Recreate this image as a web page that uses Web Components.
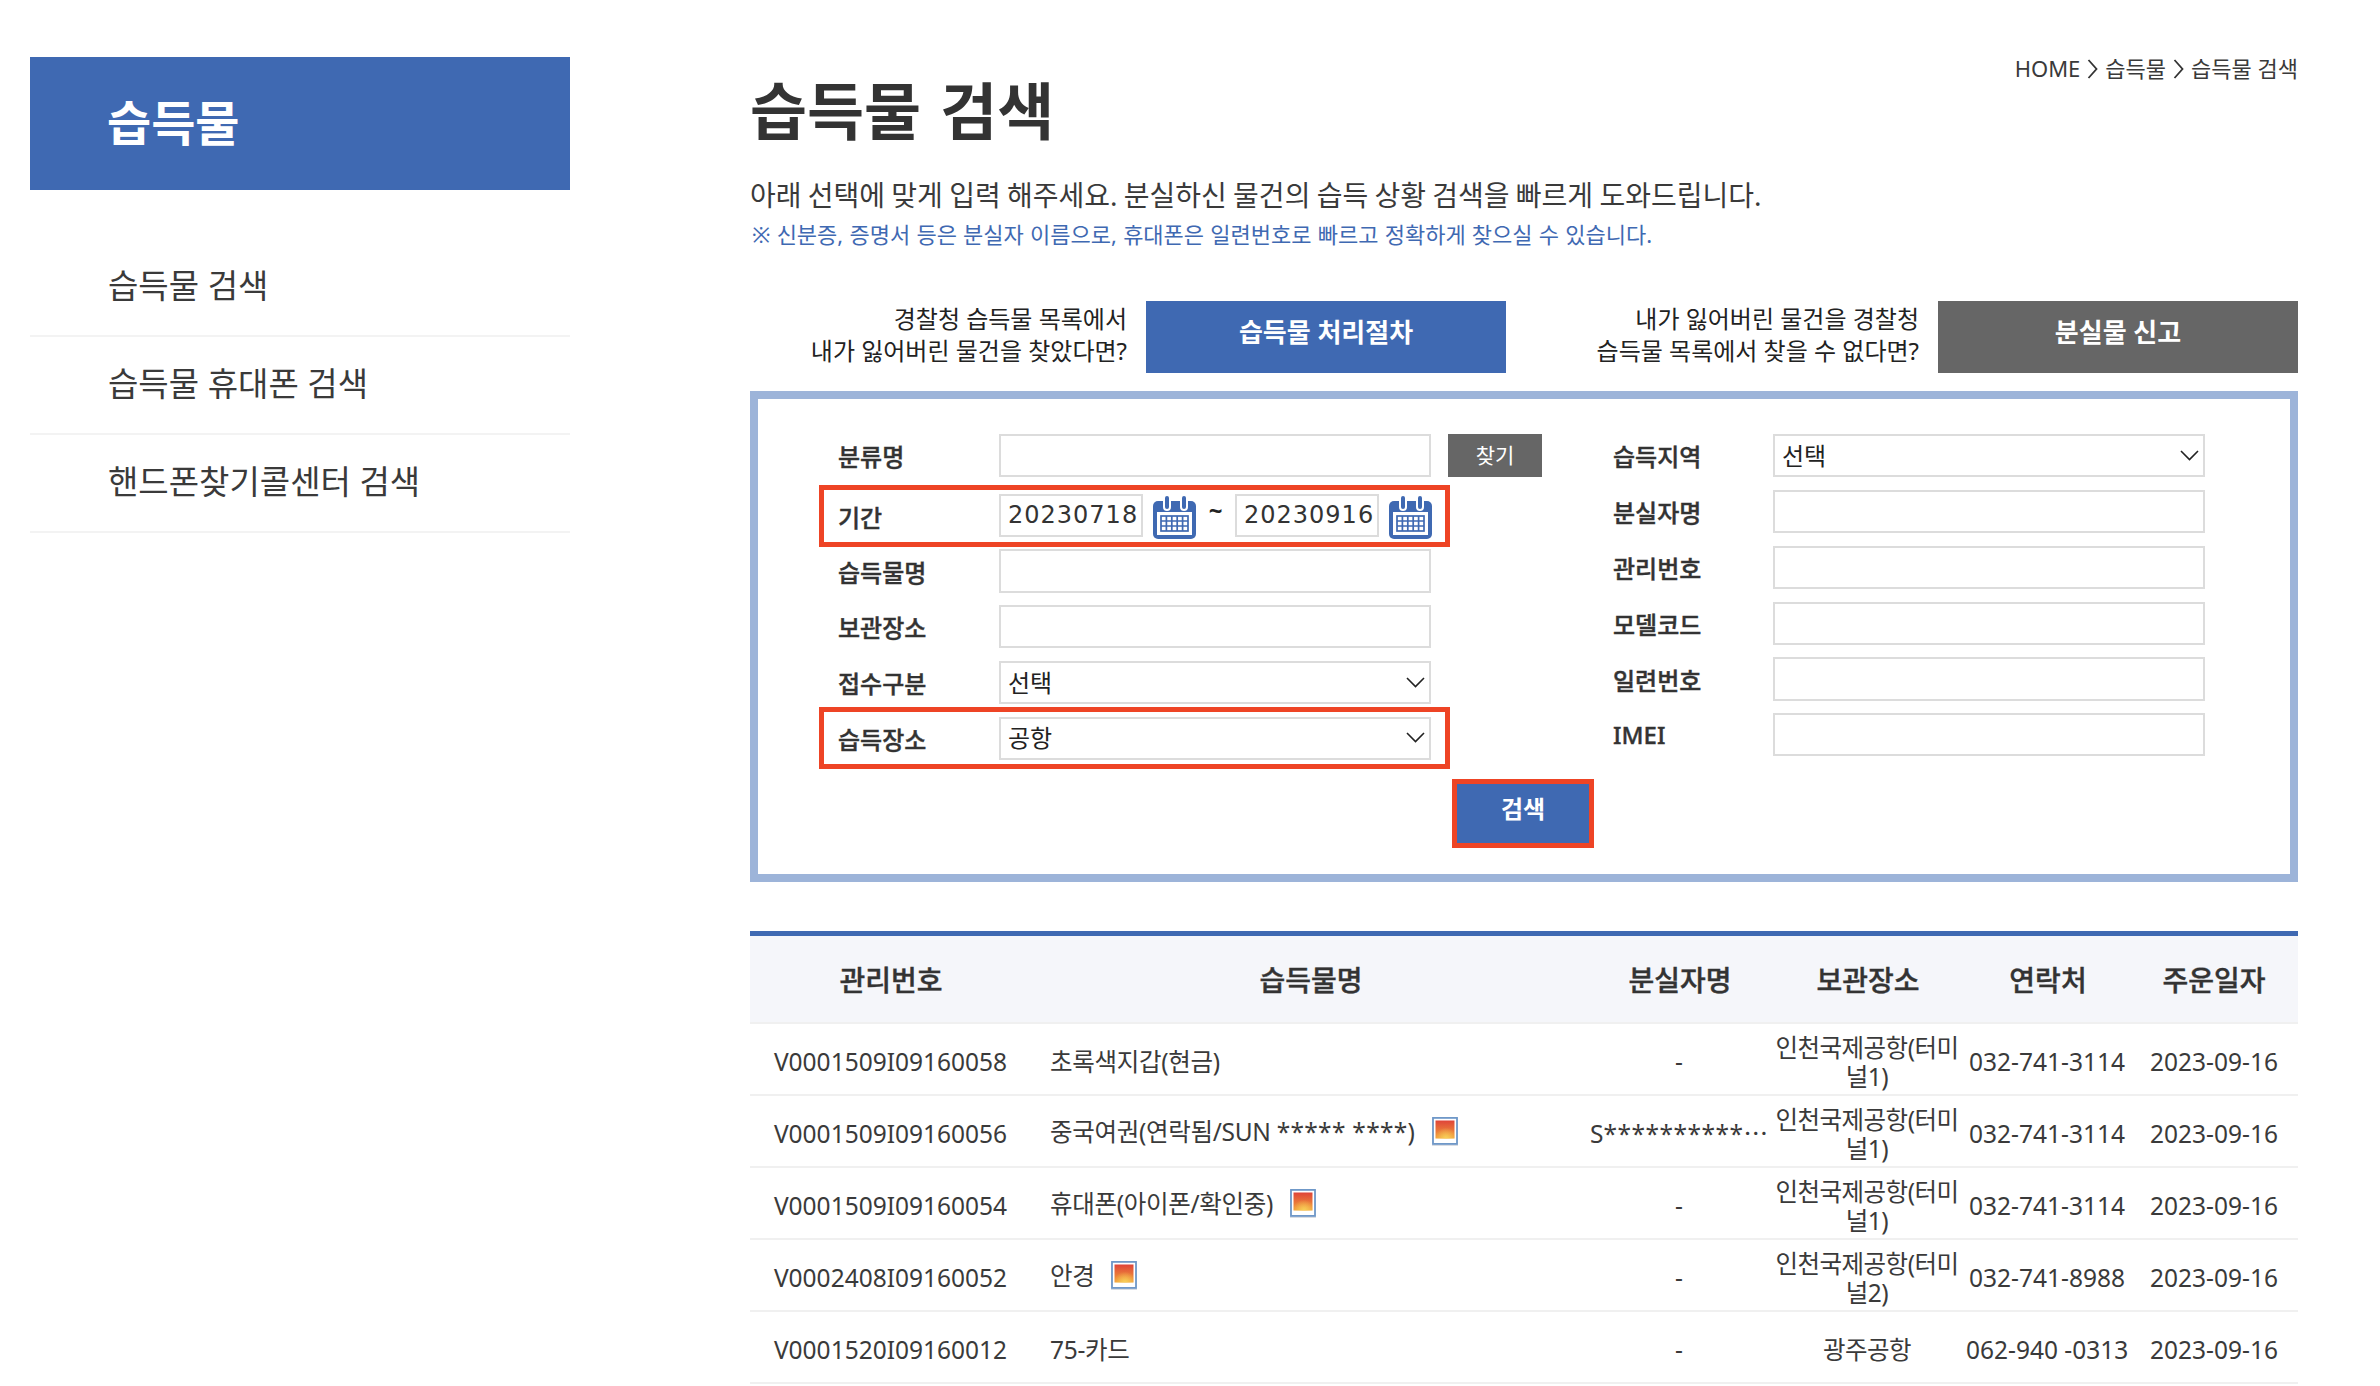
<!DOCTYPE html>
<html lang="ko">
<head>
<meta charset="utf-8">
<title>습득물 검색</title>
<style>
  html, body { margin: 0; background: #fff; }
  body { font-family: "Noto Sans", "Noto Sans CJK KR", sans-serif; color: #333; }
  .page { display: flex; align-items: flex-start; width: 2380px; height: 1386px; overflow: hidden; box-sizing: border-box; padding: 57px 0 0 30px; }
  .main { width: 1548px; margin-left: 180px; }
</style>
</head>
<body>
<div class="page">
  <lost-sidebar></lost-sidebar>
  <div class="main">
    <page-head></page-head>
    <notice-links></notice-links>
    <search-form></search-form>
    <result-table></result-table>
  </div>
</div>

<script>
const CALENDAR = `
  <svg width="43" height="43" viewBox="0 0 43 43" aria-hidden="true">
    <rect x="0" y="5" width="43" height="38" rx="5" fill="#3f69b2"/>
    <rect x="10" y="0" width="8" height="15" rx="4" fill="#fff"/>
    <rect x="27" y="0" width="8" height="15" rx="4" fill="#fff"/>
    <rect x="12" y="0" width="4" height="13" rx="2" fill="#3f69b2"/>
    <rect x="29" y="0" width="4" height="13" rx="2" fill="#3f69b2"/>
    <rect x="4" y="16" width="35" height="23" fill="#fff"/>
    <g fill="none" stroke="#3f69b2" stroke-width="1.7">
      <rect x="8" y="20" width="27" height="15"/>
      <path d="M8 25h27M8 30h27M13.4 20v15M18.8 20v15M24.2 20v15M29.6 20v15"/>
    </g>
  </svg>`;

const PICTURE = `
  <svg width="26" height="29" viewBox="0 0 26 29" aria-hidden="true">
    <defs>
      <linearGradient id="pic" x1="0" y1="0" x2="0" y2="1">
        <stop offset="0" stop-color="#df4439"/>
        <stop offset="1" stop-color="#f2a03a"/>
      </linearGradient>
      <radialGradient id="glow" cx=".55" cy="1" r=".6">
        <stop offset="0" stop-color="#f8d25a"/>
        <stop offset="1" stop-color="#f8d25a" stop-opacity="0"/>
      </radialGradient>
    </defs>
    <rect x="0" y="1" width="26" height="28" fill="#d9dde3"/>
    <rect x="1" y="0.9" width="24" height="26" fill="#fff" stroke="#6f98c8" stroke-width="1.8"/>
    <rect x="3.5" y="3.5" width="19" height="18" fill="url(#pic)"/>
    <rect x="3.5" y="3.5" width="19" height="18" fill="url(#glow)"/>
  </svg>`;

const sidebarTpl = document.createElement("template");
sidebarTpl.innerHTML = `
  <style>
    :host { display: block; width: 540px; flex: none; font-family: "Noto Sans", "Noto Sans CJK KR", sans-serif; }
    h2 {
      margin: 0; height: 133px; box-sizing: border-box; padding: 0 0 8px 77px;
      display: flex; align-items: center;
      background: #3f69b2; color: #fff; font-size: 48px; font-weight: 700;
    }
    ul { list-style: none; margin: 49px 0 0; padding: 0; }
    li {
      height: 98px; box-sizing: border-box; padding: 0 0 7px 78px;
      display: flex; align-items: center;
      border-bottom: 2px solid #f3f3f3; color: #3a3a3a; font-size: 33px;
    }
  </style>
  <h2>습득물</h2>
  <ul>
    <li>습득물 검색</li>
    <li>습득물 휴대폰 검색</li>
    <li>핸드폰찾기콜센터 검색</li>
  </ul>
`;

class LostSidebar extends HTMLElement {
  constructor() {
    super();
    this.attachShadow({ mode: "open" });
    this.shadowRoot.appendChild(sidebarTpl.content.cloneNode(true));
  }
}
customElements.define("lost-sidebar", LostSidebar);

const headTpl = document.createElement("template");
headTpl.innerHTML = `
  <style>
    :host { display: block; color: #333; }
    .top { display: flex; justify-content: space-between; align-items: flex-start; }
    h1 { margin: 19px 0 0; font-size: 62px; line-height: 70px; font-weight: 700; word-spacing: 3px; }
    nav { display: flex; align-items: center; gap: 7px; height: 26px; box-sizing: border-box; padding-bottom: 3px; font-size: 22px; line-height: 23px; color: #3a3a3a; }
    p { margin: 29px 0 0; font-size: 28px; line-height: 40px; word-spacing: -1px; color: #3a3a3a; }
    small { display: block; margin-top: 4px; padding-left: 2px; font-size: 22px; line-height: 30px; color: #3f69b2; word-spacing: .5px; }
    svg { display: block; }
  </style>
  <div class="top">
    <h1>습득물 검색</h1>
    <nav>
      <span>HOME</span>
      <svg width="11" height="20" viewBox="0 0 11 20"><path d="M1.5 1l8 9-8 9" fill="none" stroke="#333" stroke-width="1.8"/></svg>
      <span>습득물</span>
      <svg width="11" height="20" viewBox="0 0 11 20"><path d="M1.5 1l8 9-8 9" fill="none" stroke="#333" stroke-width="1.8"/></svg>
      <span>습득물 검색</span>
    </nav>
  </div>
  <p>아래 선택에 맞게 입력 해주세요. 분실하신 물건의 습득 상황 검색을 빠르게 도와드립니다.</p>
  <small>※ 신분증, 증명서 등은 분실자 이름으로, 휴대폰은 일련번호로 빠르고 정확하게 찾으실 수 있습니다.</small>
`;

class PageHead extends HTMLElement {
  constructor() {
    super();
    this.attachShadow({ mode: "open" });
    this.shadowRoot.appendChild(headTpl.content.cloneNode(true));
  }
}
customElements.define("page-head", PageHead);

const linksTpl = document.createElement("template");
linksTpl.innerHTML = `
  <style>
    :host { display: grid; grid-template-columns: 756px 756px; column-gap: 36px; margin-top: 52px; }
    .group { display: flex; justify-content: flex-end; align-items: center; gap: 19px; }
    .text { text-align: right; font-size: 24px; line-height: 32px; color: #222; padding-bottom: 4px; }
    .btn {
      width: 360px; height: 72px; display: flex; align-items: center; justify-content: center;
      color: #fff; font-size: 26px; font-weight: 700; padding-bottom: 12px; box-sizing: border-box;
    }
    .blue { background: #3f69b2; }
    .gray { background: #666; }
  </style>
  <div class="group">
    <div class="text">경찰청 습득물 목록에서<br>내가 잃어버린 물건을 찾았다면?</div>
    <div class="btn blue">습득물 처리절차</div>
  </div>
  <div class="group">
    <div class="text">내가 잃어버린 물건을 경찰청<br>습득물 목록에서 찾을 수 없다면?</div>
    <div class="btn gray">분실물 신고</div>
  </div>
`;

class NoticeLinks extends HTMLElement {
  constructor() {
    super();
    this.attachShadow({ mode: "open" });
    this.shadowRoot.appendChild(linksTpl.content.cloneNode(true));
  }
}
customElements.define("notice-links", NoticeLinks);

const rowTpl = document.createElement("template");
rowTpl.innerHTML = `
  <style>
    :host { display: flex; align-items: center; padding-left: 19px; color: #333; font-size: 24px; }
    :host([marked]) {
      width: 631px; height: 62px; box-sizing: border-box; padding-left: 14px;
      border: 5px solid #ee4425;
    }
    label { flex: none; width: var(--label-w, 161px); font-weight: 500; -webkit-text-stroke: .4px #333; }
    .slot { display: flex; align-items: flex-start; }
  </style>
  <label></label>
  <div class="slot"><slot></slot></div>
`;

class FormRow extends HTMLElement {
  constructor() {
    super();
    this.attachShadow({ mode: "open" });
    this.shadowRoot.appendChild(rowTpl.content.cloneNode(true));
  }

  connectedCallback() {
    this.shadowRoot.querySelector("label").textContent = this.getAttribute("label");
  }
}
customElements.define("form-row", FormRow);

const fieldTpl = document.createElement("template");
fieldTpl.innerHTML = `
  <style>
    :host {
      display: flex; align-items: center; justify-content: space-between; flex: none;
      width: var(--w, 432px); height: var(--h, 43px); box-sizing: border-box;
      border: 2px solid #dcdcdc; background: #fff;
      padding: 0 4px 3px 7px; color: #222; font-size: 24px; white-space: nowrap;
    }
    svg { display: none; margin-top: 2px; }
    :host([select]) svg { display: block; }
  </style>
  <span><slot></slot></span>
  <svg width="19" height="11" viewBox="0 0 19 11"><path d="M1 1l8.5 8.5L18 1" fill="none" stroke="#222" stroke-width="1.6"/></svg>
`;

class FormField extends HTMLElement {
  constructor() {
    super();
    this.attachShadow({ mode: "open" });
    this.shadowRoot.appendChild(fieldTpl.content.cloneNode(true));
  }
}
customElements.define("form-field", FormField);

const formTpl = document.createElement("template");
formTpl.innerHTML = `
  <style>
    :host {
      height: 491px; box-sizing: border-box; margin-top: 18px;
      border: 8px solid #9db4d9; padding: 35px 0 0 61px;
      display: flex;
    }
    .left { width: 775px; flex: none; display: flex; flex-direction: column; }
    .right { display: flex; flex-direction: column; --label-w: 160px; }
    .find {
      flex: none; margin-left: 17px; width: 94px; height: 43px;
      background: #666; color: #fff; font-size: 21px;
      display: flex; align-items: center; justify-content: center; padding-bottom: 3px; box-sizing: border-box;
    }
    .search {
      align-self: flex-end; margin-top: 10px; width: 142px; height: 69px; box-sizing: border-box;
      border: 5px solid #ee4425; background: #3f69b2; color: #fff;
      font-size: 24px; font-weight: 700;
      display: flex; align-items: center; justify-content: center; padding-bottom: 13px;
    }
    .date { color: #333; font: 400 24px "DejaVu Sans", sans-serif; letter-spacing: 1px; }
    .cal { display: block; margin: 2px 0 0 10px; }
    .cal svg { display: block; }
    .tilde { width: 39px; margin-top: 1px; text-align: center; font-weight: 700; line-height: 30px; color: #222; font-size: 24px; }
    .g8 { margin-top: 8px; } .g2 { margin-top: 2px; } .g12 { margin-top: 12px; } .g13 { margin-top: 13px; } .g3 { margin-top: 3px; }
  </style>
  <div class="left">
    <form-row label="분류명">
      <form-field></form-field>
      <div class="find">찾기</div>
    </form-row>
    <form-row class="g8" label="기간" marked>
      <form-field style="--w:144px"><span class="date">20230718</span></form-field>
      <span class="cal"></span>
      <span class="tilde">~</span>
      <form-field style="--w:144px"><span class="date">20230916</span></form-field>
      <span class="cal"></span>
    </form-row>
    <form-row class="g2" label="습득물명"><form-field style="--h:44px"></form-field></form-row>
    <form-row class="g12" label="보관장소"><form-field></form-field></form-row>
    <form-row class="g13" label="접수구분"><form-field select>선택</form-field></form-row>
    <form-row class="g3" label="습득장소" marked><form-field select>공항</form-field></form-row>
    <div class="search">검색</div>
  </div>
  <div class="right">
    <form-row label="습득지역"><form-field select>선택</form-field></form-row>
    <form-row class="g13" label="분실자명"><form-field></form-field></form-row>
    <form-row class="g13" label="관리번호"><form-field></form-field></form-row>
    <form-row class="g13" label="모델코드"><form-field></form-field></form-row>
    <form-row class="g12" label="일련번호"><form-field style="--h:44px"></form-field></form-row>
    <form-row class="g12" label="IMEI"><form-field></form-field></form-row>
  </div>
`;

class SearchForm extends HTMLElement {
  constructor() {
    super();
    this.attachShadow({ mode: "open" });
    this.shadowRoot.appendChild(formTpl.content.cloneNode(true));
    this.shadowRoot.querySelectorAll(".cal").forEach((el) => (el.innerHTML = CALENDAR));
  }
}
customElements.define("search-form", SearchForm);

const ITEMS = [
  ["V0001509I09160058", "초록색지갑(현금)", false, "-", "인천국제공항(터미널1)", "032-741-3114"],
  ["V0001509I09160056", `중국여권(연락됨/SUN <span class="stars">***** ****</span>)`, true, `S<span class="dots">**********⋯</span>`, "인천국제공항(터미널1)", "032-741-3114"],
  ["V0001509I09160054", "휴대폰(아이폰/확인중)", true, "-", "인천국제공항(터미널1)", "032-741-3114"],
  ["V0002408I09160052", "안경", true, "-", "인천국제공항(터미널2)", "032-741-8988"],
  ["V0001520I09160012", "75-카드", false, "-", "광주공항", "062-940 -0313"],
];

const tableTpl = document.createElement("template");
tableTpl.innerHTML = `
  <style>
    :host { display: block; margin-top: 49px; }
    table { width: 1548px; table-layout: fixed; border-collapse: collapse; border-top: 5px solid #3f69b2; }
    th {
      height: 85px; padding: 0 0 1px 2px; background: #f5f6fa; color: #333;
      font-size: 28px; font-weight: 500; -webkit-text-stroke: .4px #333;
    }
    td {
      height: 72px; box-sizing: border-box; padding: 5px 0 0; text-align: center;
      border-top: 2px solid #f0f0f0; border-bottom: 2px solid #f0f0f0;
      color: #3a3a3a; font-size: 24.5px; line-height: 29px; white-space: nowrap;
    }
    td.no { padding-left: 1px; }
    td.day { padding-left: 2px; }
    td.name { text-align: left; padding-left: 20px; letter-spacing: -.3px; }
    td.loc { white-space: normal; word-break: break-all; letter-spacing: -.5px; padding: 5px 6px 0; }
    .stars { letter-spacing: .3px; }
    .dots { letter-spacing: .5px; }
    .with-pic { display: inline-flex; align-items: center; gap: 17px; margin-bottom: 4px; }
    .with-pic svg { display: block; }
  </style>
  <table>
    <colgroup>
      <col style="width:280px"><col style="width:560px"><col style="width:178px">
      <col style="width:198px"><col style="width:162px"><col style="width:170px">
    </colgroup>
    <thead>
      <tr><th>관리번호</th><th>습득물명</th><th>분실자명</th><th>보관장소</th><th>연락처</th><th>주운일자</th></tr>
    </thead>
    <tbody></tbody>
  </table>
`;

class ResultTable extends HTMLElement {
  constructor() {
    super();
    this.attachShadow({ mode: "open" });
    this.shadowRoot.appendChild(tableTpl.content.cloneNode(true));
  }

  connectedCallback() {
    this.render();
  }

  render() {
    this.shadowRoot.querySelector("tbody").innerHTML = ITEMS.map(
      ([no, name, pic, loser, loc, tel]) => `
      <tr>
        <td class="no">${no}</td>
        <td class="name">${pic ? `<span class="with-pic"><span>${name}</span>${PICTURE}</span>` : name}</td>
        <td>${loser}</td>
        <td class="loc">${loc}</td>
        <td>${tel}</td>
        <td class="day">2023-09-16</td>
      </tr>`
    ).join("");
  }
}
customElements.define("result-table", ResultTable);
</script>
</body>
</html>
